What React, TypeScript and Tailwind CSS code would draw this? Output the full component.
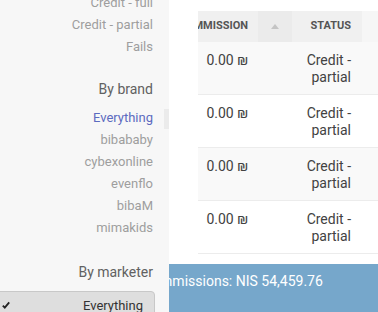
import React from 'react';

const statusItems = ['Credit - full', 'Credit - partial', 'Fails'];
const brands = ['Everything', 'bibababy', 'cybexonline', 'evenflo', 'bibaM', 'mimakids'];
const rows = [
    { commission: '0.00 ₪', status: 'Credit - partial', shade: true },
    { commission: '0.00 ₪', status: 'Credit - partial', shade: false },
    { commission: '0.00 ₪', status: 'Credit - partial', shade: true },
    { commission: '0.00 ₪', status: 'Credit - partial', shade: false },
];

const FilterItem: React.FC<{ label: string; active?: boolean }> = ({ label, active }) => (
    <div className="flex h-[22px] items-center justify-end">
        <span className={active ? 'text-[#5c6bc0]' : 'text-[#9e9e9e]'}>{label}</span>
        <div className="flex h-full w-[16px] justify-end">
            {active && <div className="mt-[2px] h-[20px] w-[5px] bg-[#ebebeb]" />}
        </div>
    </div>
);

const Sidebar: React.FC = () => (
    <aside className="flex w-[169px] shrink-0 flex-col overflow-hidden bg-[#f7f7f7] text-[13px]">
        <div className="-mt-[8px] mb-[14px]">
            {statusItems.map((s) => (
                <FilterItem key={s} label={s} />
            ))}
        </div>
        <div className="h-px bg-[#e4e4e4]" />
        <div className="mt-[7px] flex h-[22px] items-center justify-end pr-[16px] text-[14px] text-[#616161]">By brand</div>
        <div className="mt-[7px] mb-[15px]">
            {brands.map((b, i) => (
                <FilterItem key={b} label={b} active={i === 0} />
            ))}
        </div>
        <div className="h-px bg-[#e4e4e4]" />
        <div className="mt-[8px] flex h-[22px] items-center justify-end pr-[16px] text-[14px] text-[#616161]">By marketer</div>
        <button className="mt-[8px] mr-[14px] -ml-[2px] flex h-[30px] items-start justify-between rounded-tr-[4px] border border-[#c8c8c8] bg-[#dedede] pt-[4px] pr-[11px] pl-[3px] text-[13px] text-[#333]">
            <svg width="8" height="8" viewBox="0 0 8 8" className="mt-[5px]">
                <path d="M0.8 4.6 L2.8 6.6 L7.2 1.4" fill="none" stroke="#222" strokeWidth="1.8" />
            </svg>
            <span>Everything</span>
        </button>
    </aside>
);

const CommissionsTable: React.FC = () => (
    <div className="ml-[29px] mt-[11px] overflow-hidden">
        <div className="-ml-[20px] w-[260px]">
            <div className="flex h-[31px] items-center text-[11px] font-bold uppercase text-[#555]">
                <div className="flex h-full w-[80px] items-center justify-end bg-[#f0f0f0] pr-[10px]">Commission</div>
                <div className="flex h-full w-[34px] items-center justify-center bg-[#ebebeb]">
                    <svg width="8" height="5" viewBox="0 0 8 5">
                        <path d="M0 5 L4 0 L8 5 Z" fill="#c4c4c4" />
                    </svg>
                </div>
                <div className="flex h-full w-[70px] items-center justify-end bg-[#f0f0f0] pr-[11px]">Status</div>
                <div className="h-full flex-1 bg-[#f6f6f6]" />
            </div>
            {rows.map((r, i) => (
                <div
                    key={i}
                    className={`flex h-[53px] border-b border-[#ececec] pt-[10px] text-[14px] leading-[17px] text-[#424242] ${r.shade ? 'bg-[#f9f9f9]' : 'bg-white'}`}
                >
                    <div className="w-[80px] pr-[10px] text-right">{r.commission}</div>
                    <div className="w-[34px]" />
                    <div className="w-[70px] pr-[11px] text-right">{r.status}</div>
                </div>
            ))}
        </div>
    </div>
);

export default function App() {
    return (
        <div className="flex h-[312px] w-[378px] overflow-hidden bg-white font-['Roboto',sans-serif]">
            <Sidebar />
            <main className="flex min-w-0 flex-1 flex-col">
                <CommissionsTable />
                <div className="mt-[10px] flex-1 overflow-hidden bg-[#76a7cb] pt-[7px] text-[14px] leading-[20px] text-white">
                    <div className="-ml-[26px] whitespace-nowrap">Commissions: NIS 54,459.76</div>
                </div>
            </main>
        </div>
    );
}
